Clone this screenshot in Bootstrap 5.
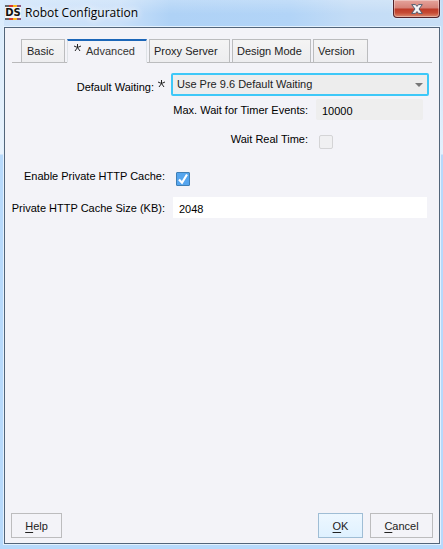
<!DOCTYPE html>
<html lang="en">
<head>
<meta charset="utf-8">
<meta name="viewport" content="width=device-width, initial-scale=1">
<title>Robot Configuration</title>
<link href="https://cdn.jsdelivr.net/npm/bootstrap@5.3.0/dist/css/bootstrap.min.css" rel="stylesheet">
<style>
  body {
    font: 11px/16px "Liberation Sans", Arial, sans-serif;
    color: #111;
    background: #b7d9fb;
  }
  .win {
    padding: 0 3px 5px 4px;
    background:
      linear-gradient(180deg, #d9ebfc 0, #e8f2fc 154px, transparent 155px) left / 4px 100% no-repeat,
      linear-gradient(180deg, #c3dbf5 0, #e4f1fd 154px, transparent 155px) right / 3px 100% no-repeat,
      linear-gradient(180deg, rgba(255,255,255,.22), transparent 14px),
      linear-gradient(90deg, #cfe4fa 0, #c9e0f9 120px, #afd2f6 170px, #b2d4f7 290px, #c3dcf6 350px, #c8dff6 100%) top / 100% 28px no-repeat,
      #b7d9fb;
  }
  .titlebar { height: 27px; padding-left: 1px; }
  .title-text {
    font: 400 12px/18px "Open Sans", "Noto Sans", sans-serif;
    color: #000;
    text-shadow: 0 0 6px #fff, 0 0 10px #fff;
  }
  .close-btn {
    width: 47px; height: 18px;
    border: 1px solid #52222a; border-top: 0;
    border-radius: 0 0 4px 4px;
    background: linear-gradient(180deg, #e5a49c 0, #d58076 48%, #bd3a28 52%, #c64a33 75%, #dc8a70 100%);
    box-shadow: inset 0 0 0 1px rgba(255,255,255,.35), 0 0 2px #fff;
  }
  .client { background: #f3f3f8; border: 1px solid #52657a; box-shadow: 0 0 0 1px #e3f1fe; padding: 11px 6px 5px 6px; }
  .tabs { border-bottom: 1px solid #b9b9bb; padding: 0 0 0 9px; margin: 0 1px; gap: 2px; }
  .tabs .nav-link {
    height: 24px; margin-bottom: -1px; padding: 0 5px;
    border: 1px solid #bbbcbe; border-radius: 0;
    background: linear-gradient(#f4f4f4, #ededef); color: #222; line-height: 22px; white-space: nowrap;
  }
  .tabs .nav-link.snug { padding: 0 4px; }
  .tabs .nav-link.active {
    background: #f3f3f8; color: #333; border-top: 2px solid #1c66b8; border-bottom-color: #f3f3f8; line-height: 20px;
  }
  .w-basic { width: 44px; } .w-adv { width: 80px; } .w-proxy { width: 81px; } .w-design { width: 79px; } .w-ver { width: 55px; }
  .form-area { padding: 10px 4px 0 0; }
  .line { display: grid; grid-template-columns: 154px 1fr; column-gap: 8px; padding-right: 2px; align-items: start; }
  .line.top { column-gap: 6px; padding-right: 0; }
  .line.sub { grid-template-columns: 1fr 107px; padding-right: 6px; }
  .line label { text-align: right; color: #000; white-space: nowrap; }
  .line .beside-text { padding-top: 3px; }
  .line .beside-select { padding-top: 6px; gap: 4px; }
  .gap-close { margin-top: 3px; } .gap-row { margin-top: 11px; } .gap-group { margin-top: 19px; }
  .ctl-select {
    height: 23px; padding: 0 24px 0 4px; border: 2px solid #3ec8f8; border-radius: 2px;
    font-size: 11px; line-height: 19px; color: #222; background-color: #ededed;
    background-image: url("data:image/svg+xml,%3Csvg xmlns='http://www.w3.org/2000/svg' viewBox='0 0 8 4'%3E%3Cpath d='M0 0h8L4 4z' fill='%23777'/%3E%3C/svg%3E");
    background-size: 8px 4px; background-position: right 4px center;
  }
  .ctl-select:focus { box-shadow: none; border-color: #3ec8f8; }
  .ctl-text { height: 21px; min-height: 0; padding: 2px 6px 0; border: 0; border-radius: 0; font-size: 11px; line-height: 18px; color: #000; background: #fff; }
  .ctl-text[readonly] { background: #eee; border-radius: 2px; }
  .ctl-check.form-check-input { width: 14px; height: 14px; margin: 4px 3px 0; border: 1px solid #d4d4d6; border-radius: 2px; background-color: #f0f0f2; opacity: 1; }
  .ctl-check.form-check-input:checked {
    background-color: #55a5ee; border-color: #3f7fb5; border-radius: 1px;
    background-image: url("data:image/svg+xml,%3Csvg xmlns='http://www.w3.org/2000/svg' viewBox='0 0 12 12'%3E%3Cpath d='M2 6.5l3 3.2L10 1.5' fill='none' stroke='%23fff' stroke-width='2.2'/%3E%3C/svg%3E");
    background-size: 12px 12px;
  }
  .dlg-btn { height: 25px; padding: 0; border: 1px solid #bcbcbe; border-radius: 0; font-size: 11px; line-height: 22px; color: #222; background: #f3f3f8; }
  .dlg-btn.primary { background: linear-gradient(#edf7ff, #dff1ff); border-color: #9fbdd5; }
  .w-help { width: 51px; } .w-ok { width: 45px; } .w-cancel { width: 63px; }
  .action-bar { gap: 7px; }
  .dlg-btn u { text-underline-offset: 2px; }
</style>
</head>
<body>
<div class="win min-vh-100 d-flex flex-column">
  <header class="titlebar d-flex align-items-start">
    <svg class="mt-1 flex-shrink-0" width="16" height="17" viewBox="0 0 16 17" role="img" aria-label="DS">
      <path fill="#666" d="M0 1h4v2H0zM0 14h4v2H0z"/>
      <path fill="#d83a2f" d="M4 1h4v2H4zM4 14h4v2H4z"/>
      <path fill="#fbb817" d="M8 1h4v2H8zM8 14h4v2H8z"/>
      <path fill="#8c527b" d="M12 1h4v2h-4zM12 14h4v2h-4z"/>
      <path fill="#f5f5f5" d="M0 3h16v11H0z"/>
      <text x="8" y="12" text-anchor="middle" font-family="DejaVu Sans, sans-serif" font-weight="700" font-size="10" fill="#111">DS</text>
    </svg>
    <h1 class="title-text mb-0 mt-1 ms-1">Robot Configuration</h1>
    <button type="button" class="close-btn ms-auto p-0 d-flex justify-content-center align-items-start" aria-label="Close">
      <svg class="mt-1" width="12" height="10" viewBox="0 0 12 10"><path d="M.7.6h3.800L6 2.400 7.500.6h3.800L8 5l3.300 4.400H7.500L6 7.600 4.500 9.400H.7L4 5z" fill="#f5f5f7" stroke="#525d70" stroke-width="1"/></svg>
    </button>
  </header>
  <main class="client flex-grow-1 d-flex flex-column">
    <ul class="nav nav-tabs tabs flex-nowrap" role="tablist">
      <li class="nav-item"><button type="button" class="nav-link w-basic text-start" role="tab">Basic</button></li>
      <li class="nav-item"><button type="button" class="nav-link active w-adv text-start d-flex gap-1" role="tab" aria-selected="true">
        <svg width="9" height="11" viewBox="0 -2 9 11" aria-hidden="true"><path d="M4.500 4.500V1M4.500 4.500L1 3M4.500 4.500L8 3M4.500 4.500L2 8M4.500 4.500L7 8" stroke="#222" fill="none"/></svg>
        <span>Advanced</span></button></li>
      <li class="nav-item"><button type="button" class="nav-link snug w-proxy text-start" role="tab">Proxy Server</button></li>
      <li class="nav-item"><button type="button" class="nav-link snug w-design text-start" role="tab">Design Mode</button></li>
      <li class="nav-item"><button type="button" class="nav-link snug w-ver text-start" role="tab">Version</button></li>
    </ul>
    <form class="form-area flex-grow-1" id="config">
      <div class="line top">
        <label for="waiting" class="beside-select d-flex justify-content-end"><span>Default Waiting:</span>
          <svg width="7" height="9" viewBox="1 0 7 9" aria-hidden="true"><path d="M4.500 4.500V1M4.500 4.500L1 3M4.500 4.500L8 3M4.500 4.500L2 8M4.500 4.500L7 8" stroke="#222" fill="none"/></svg>
        </label>
        <select id="waiting" class="form-select ctl-select"><option>Use Pre 9.6 Default Waiting</option></select>
      </div>
      <div class="line sub gap-close">
        <label for="maxwait" class="beside-text">Max. Wait for Timer Events:</label>
        <input id="maxwait" type="text" class="form-control ctl-text" value="10000" readonly>
      </div>
      <div class="line sub gap-row">
        <label for="realtime">Wait Real Time:</label>
        <input id="realtime" type="checkbox" class="form-check-input ctl-check" disabled>
      </div>
      <div class="line gap-group">
        <label for="cache">Enable Private HTTP Cache:</label>
        <input id="cache" type="checkbox" class="form-check-input ctl-check" checked>
      </div>
      <div class="line gap-row">
        <label for="size" class="beside-text">Private HTTP Cache Size (KB):</label>
        <input id="size" type="text" class="form-control ctl-text" value="2048">
      </div>
    </form>
    <footer class="d-flex action-bar">
      <button type="button" class="btn dlg-btn w-help"><u>H</u>elp</button>
      <button type="submit" form="config" class="btn dlg-btn primary w-ok ms-auto"><u>O</u>K</button>
      <button type="button" class="btn dlg-btn w-cancel"><u>C</u>ancel</button>
    </footer>
  </main>
</div>
<script src="https://cdn.jsdelivr.net/npm/bootstrap@5.3.0/dist/js/bootstrap.bundle.min.js"></script>
</body>
</html>
